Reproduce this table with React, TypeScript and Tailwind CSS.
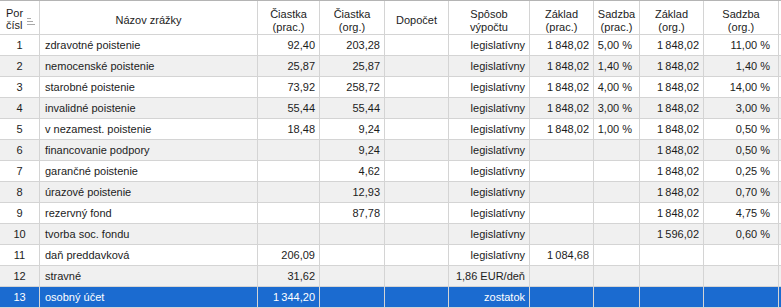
import React from "react";

type Row = {
  id: number;
  name: string;
  amtEmp: string;
  amtOrg: string;
  extra: string;
  method: string;
  baseEmp: string;
  rateEmp: string;
  baseOrg: string;
  rateOrg: string;
};

const B = "1\u202f848,02";

const rows: Row[] = [
  { id: 1, name: "zdravotné poistenie", amtEmp: "92,40", amtOrg: "203,28", extra: "", method: "legislatívny", baseEmp: B, rateEmp: "5,00 %", baseOrg: B, rateOrg: "11,00 %" },
  { id: 2, name: "nemocenské poistenie", amtEmp: "25,87", amtOrg: "25,87", extra: "", method: "legislatívny", baseEmp: B, rateEmp: "1,40 %", baseOrg: B, rateOrg: "1,40 %" },
  { id: 3, name: "starobné poistenie", amtEmp: "73,92", amtOrg: "258,72", extra: "", method: "legislatívny", baseEmp: B, rateEmp: "4,00 %", baseOrg: B, rateOrg: "14,00 %" },
  { id: 4, name: "invalidné poistenie", amtEmp: "55,44", amtOrg: "55,44", extra: "", method: "legislatívny", baseEmp: B, rateEmp: "3,00 %", baseOrg: B, rateOrg: "3,00 %" },
  { id: 5, name: "v nezamest. poistenie", amtEmp: "18,48", amtOrg: "9,24", extra: "", method: "legislatívny", baseEmp: B, rateEmp: "1,00 %", baseOrg: B, rateOrg: "0,50 %" },
  { id: 6, name: "financovanie podpory", amtEmp: "", amtOrg: "9,24", extra: "", method: "legislatívny", baseEmp: "", rateEmp: "", baseOrg: B, rateOrg: "0,50 %" },
  { id: 7, name: "garančné poistenie", amtEmp: "", amtOrg: "4,62", extra: "", method: "legislatívny", baseEmp: "", rateEmp: "", baseOrg: B, rateOrg: "0,25 %" },
  { id: 8, name: "úrazové poistenie", amtEmp: "", amtOrg: "12,93", extra: "", method: "legislatívny", baseEmp: "", rateEmp: "", baseOrg: B, rateOrg: "0,70 %" },
  { id: 9, name: "rezervný fond", amtEmp: "", amtOrg: "87,78", extra: "", method: "legislatívny", baseEmp: "", rateEmp: "", baseOrg: B, rateOrg: "4,75 %" },
  { id: 10, name: "tvorba soc. fondu", amtEmp: "", amtOrg: "", extra: "", method: "legislatívny", baseEmp: "", rateEmp: "", baseOrg: "1\u202f596,02", rateOrg: "0,60 %" },
  { id: 11, name: "daň preddavková", amtEmp: "206,09", amtOrg: "", extra: "", method: "legislatívny", baseEmp: "1\u202f084,68", rateEmp: "", baseOrg: "", rateOrg: "" },
  { id: 12, name: "stravné", amtEmp: "31,62", amtOrg: "", extra: "", method: "1,86 EUR/deň", baseEmp: "", rateEmp: "", baseOrg: "", rateOrg: "" },
  { id: 13, name: "osobný účet", amtEmp: "1\u202f344,20", amtOrg: "", extra: "", method: "zostatok", baseEmp: "", rateEmp: "", baseOrg: "", rateOrg: "" },
];

const cell = "shrink-0 h-full border-r border-[#d4d4d4] flex items-center overflow-hidden whitespace-nowrap";

function SortIcon() {
  return (
    <svg width="8" height="7" viewBox="0 0 8 7" className="shrink-0 mt-[11px]">
      <rect x="0" y="0" width="4" height="1" fill="#a8a8a8" />
      <rect x="0" y="3" width="6" height="1" fill="#a8a8a8" />
      <rect x="0" y="6" width="8" height="1" fill="#a8a8a8" />
    </svg>
  );
}

function Head({ w, a, b }: { w: string; a: string; b?: string }) {
  return (
    <div className={`${cell} ${w} justify-center text-center leading-[13px]`}>
      <div className={b ? "pt-[6px]" : "pt-[5px]"}>
        <div>{a}</div>
        {b && <div>{b}</div>}
      </div>
    </div>
  );
}

export default function App() {
  return (
    <div
      className="w-[781px] h-[308px] overflow-hidden bg-white text-[11px] text-[#1c1c1c]"
      style={{ fontFamily: '"Liberation Sans", Arial, sans-serif' }}
    >
      {/* header */}
      <div className="flex h-[35px] border-t border-b border-t-[#b4b4b4] border-b-[#d4d4d4] bg-white">
        <div className="shrink-0 h-full w-[40px] border-r border-[#d4d4d4] flex items-start pt-[6px] pl-[6px] gap-[4px] leading-[12px]">
          <div>
            <div>Por</div>
            <div>čísl</div>
          </div>
          <SortIcon />
        </div>
        <Head w="w-[218px]" a="Názov zrážky" />
        <Head w="w-[62px]" a="Čiastka" b="(prac.)" />
        <Head w="w-[65px]" a="Čiastka" b="(org.)" />
        <Head w="w-[64px]" a="Dopočet" />
        <Head w="w-[81px]" a="Spôsob" b="výpočtu" />
        <Head w="w-[64px]" a="Základ" b="(prac.)" />
        <Head w="w-[46px]" a="Sadzba" b="(prac.)" />
        <Head w="w-[64px]" a="Základ" b="(org.)" />
        <Head w="w-[75px]" a="Sadzba" b="(org.)" />
        <div className="flex-1" />
      </div>

      {/* rows */}
      {rows.map((r) => {
        const sel = r.id === 13;
        const bg = sel ? "bg-[#1b6bd0] text-white" : r.id % 2 === 0 ? "bg-[#f0f0f0]" : "bg-white";
        return (
          <div key={r.id} className={`flex h-[21px] border-b border-[#d4d4d4] ${bg}`}>
            <div className={`${cell} w-[40px] justify-center`}>{r.id}</div>
            <div className={`${cell} w-[218px] pl-[5px]`}>{r.name}</div>
            <div className={`${cell} w-[62px] justify-end pr-[4px]`}>{r.amtEmp}</div>
            <div className={`${cell} w-[65px] justify-end pr-[4px]`}>{r.amtOrg}</div>
            <div className={`${cell} w-[64px] justify-end pr-[4px]`}>{r.extra}</div>
            <div className={`${cell} w-[81px] justify-end pr-[4px]`}>{r.method}</div>
            <div className={`${cell} w-[64px] justify-end pr-[4px]`}>{r.baseEmp}</div>
            <div className={`${cell} w-[46px] justify-end pr-[7px]`}>{r.rateEmp}</div>
            <div className={`${cell} w-[64px] justify-end pr-[4px]`}>{r.baseOrg}</div>
            <div className={`${cell} w-[75px] justify-end pr-[8px]`}>{r.rateOrg}</div>
            <div className="flex-1" />
          </div>
        );
      })}
    </div>
  );
}
